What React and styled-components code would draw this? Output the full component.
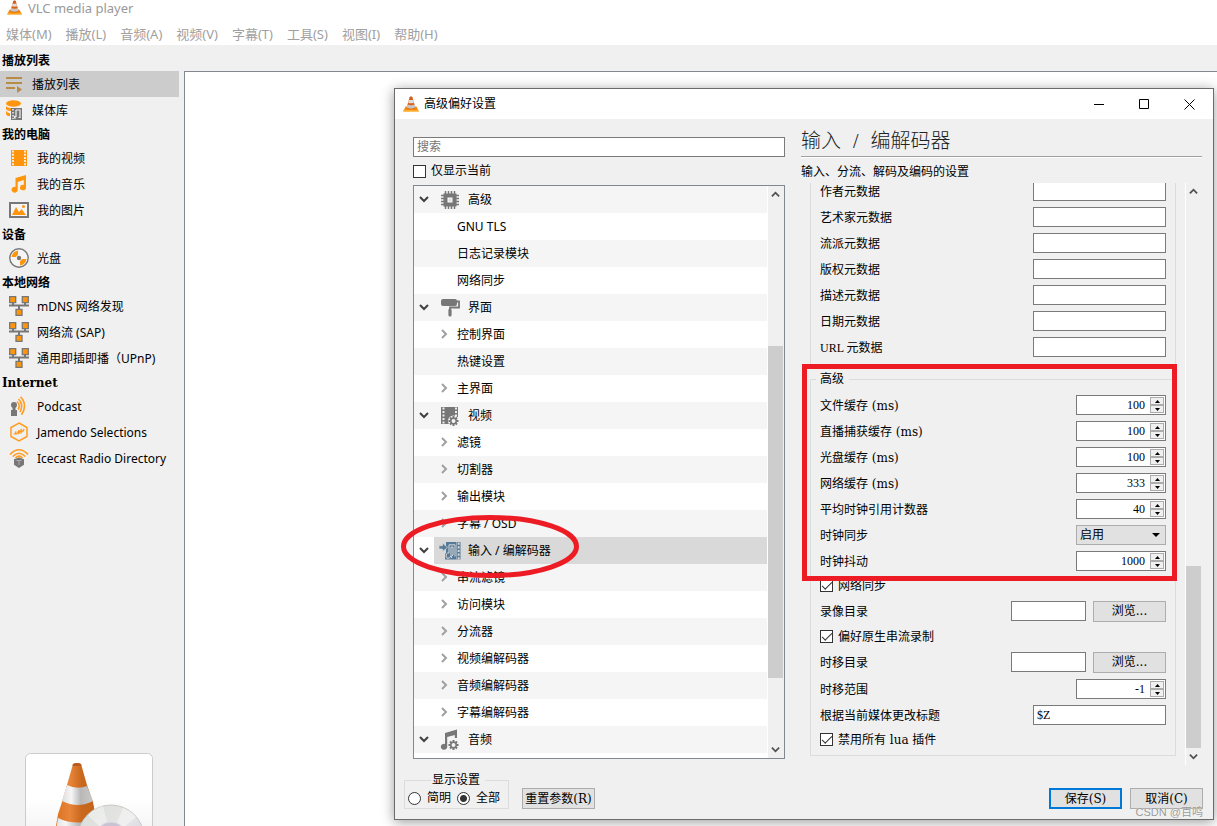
import React, { useState } from "react";
import styled, { createGlobalStyle } from "styled-components";

const uiFont = `"Noto Sans", "Noto Sans CJK SC", sans-serif`;
const formFont = `"DejaVu Serif", "Noto Sans CJK SC", serif`;
const numberFont = `"Liberation Serif", "Noto Sans CJK SC", serif`;

const GlobalStyle = createGlobalStyle`
	* {
		box-sizing: border-box;
	}
	body {
		margin: 0;
		overflow: hidden;
		background: #f0f0f0;
		color: #000;
		font: 12px/16px ${uiFont};
	}
	button, input, select {
		margin: 0;
		font: inherit;
		color: inherit;
	}
`;

const Page = styled.div`
	position: relative;
	display: flex;
	flex-direction: column;
	height: 100vh;
	overflow: hidden;
`;
const AppTitle = styled.header`
	display: flex;
	align-items: center;
	gap: 6px;
	height: 18px;
	padding: 0 7px 2px;
	background: #fff;
	color: #999;
	font-size: 13px;
	svg {
		align-self: flex-start;
	}
`;
const MenuBar = styled.nav`
	display: flex;
	align-items: center;
	gap: 14px;
	height: 27px;
	padding: 5px 6px 0;
	background: #fff;
`;
const MenuButton = styled.button`
	padding: 0;
	border: 0;
	background: none;
	color: #a0a0a0;
	font-size: 13px;
	white-space: nowrap;
`;
const Workspace = styled.div`
	display: flex;
	flex: 1;
	min-height: 0;
`;
const Sidebar = styled.aside`
	display: flex;
	flex-direction: column;
	flex: none;
	width: 184px;
	padding-top: 4px;
`;
const SideTitle = styled.h2`
	height: 22px;
	margin: 0;
	padding-left: 2px;
	font: bold 12px/24px ${formFont};
`;
const SideItem = styled.a`
	display: flex;
	align-items: center;
	gap: 8px;
	height: 26px;
	width: 179px;
	padding-left: ${props => (props.$compact ? 4 : 9)}px;
	background: ${props => (props.$active ? "#cccccc" : "transparent")};
	color: #000;
	text-decoration: none;
	white-space: nowrap;
	svg {
		flex: none;
	}
`;
const SideLabel = styled.span`
	padding-top: 2px;
`;
const Cover = styled.div`
	height: 73px;
	margin: auto 0 0 25px;
	overflow: hidden;
	svg {
		display: block;
	}
`;
const Content = styled.main`
	flex: 1;
	margin-top: 26px;
	border: solid #828790;
	border-width: 1px 0 0 1px;
	background: #fff;
`;

// preferences window
const Dialog = styled.section`
	position: absolute;
	top: 88px;
	right: 3px;
	bottom: 6px;
	left: 394px;
	display: flex;
	flex-direction: column;
	border: 1px solid #6b6b6b;
	background: #f0f0f0;
	box-shadow: 0 2px 12px rgba(0, 0, 0, 0.4);
`;
const DialogTitle = styled.header`
	display: flex;
	align-items: center;
	height: 30px;
	padding: 0 1px 0 8px;
	background: #fff;
	svg {
		flex: none;
	}
	h1 {
		flex: 1;
		margin: 0 0 0 5px;
		font: 12px/16px ${uiFont};
	}
`;
const WindowButton = styled.button`
	display: grid;
	place-items: center;
	width: 45px;
	height: 29px;
	padding: 0;
	border: 0;
	background: none;
`;
const DialogBody = styled.div`
	display: grid;
	grid-template-columns: 372px minmax(0, 1fr);
	gap: 16px;
	flex: 1;
	min-height: 0;
	padding: 0 11px 0 18px;
	font-family: ${formFont};
`;
const TreeColumn = styled.div`
	display: flex;
	flex-direction: column;
	min-height: 0;
	padding: 18px 0 13px;
`;
const TextBox = styled.input`
	width: ${props => props.$width || "100%"};
	height: 20px;
	padding: 0 3px;
	border: 1px solid #7a7a7a;
	border-radius: 0;
	background: #fff;
	font-family: ${numberFont};
	outline: 0;
	&::placeholder {
		color: #757575;
	}
`;
const CheckLabel = styled.label`
	display: flex;
	align-items: center;
	gap: 5px;
	height: ${props => props.$height}px;
`;
const CheckBox = styled.input`
	display: grid;
	place-items: center;
	width: 13px;
	height: 13px;
	appearance: none;
	border: 1px solid #333;
	background: #fff;
	&:checked::before {
		content: "";
		width: 9px;
		height: 4px;
		margin-top: -3px;
		border: solid #333;
		border-width: 0 0 1px 1px;
		transform: rotate(-45deg);
	}
`;
const TreeBox = styled.div`
	display: flex;
	flex: 1;
	min-height: 0;
	border: 1px solid #828790;
	background: #fff;
	overflow: hidden;
`;
const TreeList = styled.ul`
	flex: 1;
	margin: 0 1px 0 0;
	padding: 0;
	list-style: none;
	font-family: ${uiFont};
`;
const TreeRow = styled.li`
	display: flex;
	height: 27px;
	background: ${props => (props.$striped ? "#f5f5f5" : "#fff")};
`;
const TreeToggle = styled.span`
	display: grid;
	place-items: center;
	flex: none;
	width: 20px;
	padding: 0 1px 2px 0;
	color: ${props => (props.$child ? "#a0a0a0" : "#404040")};
`;
const TreeItem = styled.span`
	display: flex;
	align-items: center;
	flex: 1;
	gap: ${props => (props.$child ? 3 : 8)}px;
	padding-left: ${props => (props.$child ? 0 : 6)}px;
	background: ${props => (props.$selected ? "#d9d9d9" : "transparent")};
	svg {
		flex: none;
	}
`;
const ScrollBar = styled.div`
	display: flex;
	flex-direction: column;
	flex: none;
	width: ${props => (props.$edge ? 17 : 16)}px;
	border-left: ${props => (props.$edge ? "1px solid #fff" : 0)};
	background: #f0f0f0;
	color: #505050;
`;
const ScrollArrow = styled.button`
	display: grid;
	place-items: center;
	flex: none;
	width: 15px;
	height: 17px;
	padding: 0;
	border: 0;
	background: none;
`;
const ScrollTrack = styled.div`
	display: flex;
	flex-direction: column;
	flex: 1;
`;
const ScrollSpace = styled.div`
	flex: ${props => props.$size};
`;
const ScrollThumb = styled.div`
	flex: ${props => props.$size};
	background: #cdcdcd;
	width: 15px;
`;
const OptionColumn = styled.div`
	display: flex;
	flex-direction: column;
	min-height: 0;
	padding-bottom: 7px;
`;
const OptionTitle = styled.h2`
	flex: none;
	height: 38px;
	margin: 0;
	padding-top: 7px;
	border-bottom: 1px solid #a0a0a0;
	box-shadow: 0 1px #fff;
	color: #222;
	font: 300 20px/30px ${numberFont};
	white-space: nowrap;
`;
const Slash = styled.span`
	margin: 0 7px;
`;
const OptionHint = styled.p`
	flex: none;
	height: 26px;
	margin: 0;
	line-height: 30px;
`;
const OptionScroll = styled.div`
	display: flex;
	flex: 1;
	min-height: 0;
	gap: 9px;
`;
const OptionPane = styled.div`
	display: flex;
	flex-direction: column;
	justify-content: flex-end;
	flex: 1;
	gap: 4px;
	padding: 0 0 9px 9px;
	overflow: hidden;
`;
const Group = styled.fieldset`
	flex: none;
	min-width: 0;
	margin: 0;
	padding: ${props => (props.$first ? "0 9px 6px" : "5px 9px 4px")};
	border: 1px solid #dcdcdc;
	legend {
		padding: 0 5px 0 4px;
		margin-left: -4px;
	}
`;
const OptionRow = styled.div`
	display: flex;
	align-items: center;
	gap: 7px;
	height: ${props => props.$height || 26}px;
	label {
		flex: 1;
		padding-top: 2px;
		white-space: nowrap;
		font-family: ${props => (props.$narrow ? numberFont : formFont)};
	}
`;
const SpinBox = styled.div`
	display: flex;
	align-items: center;
	width: 90px;
	height: 20px;
	border: 1px solid #7a7a7a;
	background: #fff;
	padding-right: 1px;
	input {
		flex: 1;
		min-width: 0;
		height: 18px;
		padding: 0 5px 0 0;
		border: 0;
		background: none;
		font-family: ${numberFont};
		text-align: right;
		outline: 0;
	}
`;
const SpinButtons = styled.div`
	display: grid;
	grid-template-rows: 8px 8px;
	width: 14px;
	background: #f0f0f0;
	button {
		display: grid;
		place-items: center;
		padding: 0;
		border: 1px solid #acacac;
		background: none;
	}
`;
const SelectWrap = styled.div`
	position: relative;
	width: 90px;
	select {
		display: block;
		width: 100%;
		height: 20px;
		padding: 0 3px;
		appearance: none;
		border: 1px solid #acacac;
		border-radius: 0;
		background: #e1e1e1;
	}
	svg {
		position: absolute;
		top: 8px;
		right: 6px;
		pointer-events: none;
	}
`;
const PushButton = styled.button`
	width: 73px;
	height: 21px;
	padding: 0;
	border: ${props => (props.$primary ? "2px solid #0078d7" : "1px solid #adadad")};
	background: #e1e1e1;
	font-family: ${formFont};
	white-space: nowrap;
`;
const DialogFooter = styled.footer`
	display: flex;
	align-items: flex-end;
	height: 47px;
	padding: 0 10px 10px 9px;
	font-family: ${formFont};
`;
const ModeGroup = styled.fieldset`
	display: flex;
	align-items: center;
	gap: 6px;
	width: 105px;
	height: 37px;
	margin: 0 13px 0 0;
	padding: 0 0 0 3px;
	border: 1px solid #dcdcdc;
	legend {
		margin: 0 auto;
		padding: 0 5px 0 1px;
	}
	label {
		display: flex;
		align-items: center;
		gap: 6px;
	}
`;
const Radio = styled.input`
	width: 13px;
	height: 13px;
	appearance: none;
	border: 1px solid #333;
	border-radius: 50%;
	background: #fff;
	&:checked {
		background: radial-gradient(circle, #333 3px, #fff 4px);
	}
`;
const FooterActions = styled.div`
	display: flex;
	gap: 8px;
	margin-left: auto;
`;

// hand-drawn marks over the window
const RedFrame = styled.div`
	position: absolute;
	top: 364px;
	right: 40px;
	width: 375px;
	height: 217px;
	border: 5px solid #ed1c24;
	pointer-events: none;
`;
const RedEllipse = styled.svg`
	position: absolute;
	top: 514px;
	left: 400px;
	pointer-events: none;
`;
const Watermark = styled.span`
	position: absolute;
	right: 14px;
	bottom: 6px;
	color: #999;
	font: 11px/16px "Liberation Sans", "Noto Sans CJK SC", sans-serif;
	text-shadow: 0 0 1px #fff;
`;

const ConeIcon = ({ size = 16 }) => (
	<svg width={size} height={size} viewBox="0 0 16 16">
		<path d="M2.500 10.500h11l2 4.500H.5z" fill="#f58a0b" />
		<path d="M.6 14h14.800l.6 1.800H0z" fill="#ffab2e" />
		<path d="M6.700 1Q8 0 9.300 1L12.500 12Q8 14.400 3.500 12z" fill="#e25c10" />
		<path d="M5.900 4h4.200l.8 2.700Q8 7.700 5.100 6.700z" fill="#ddd" />
		<path d="M4.500 8.600Q8 10 11.500 8.600L12.400 11.500Q8 13.800 3.600 11.500z" fill="#c6c6c6" />
		<path d="M6.700 1Q8 0 9.300 1l.4 1.200H6.300z" fill="#b96a3a" />
	</svg>
);

const PlaylistIcon = () => (
	<svg width="20" height="18" viewBox="0 0 20 18">
		<path d="M2 3h16M2 8h16M2 13h9" stroke="#b78b48" strokeWidth="2" />
		<path d="M13 11l5 3.500-5 3.500z" fill="#b78b48" />
	</svg>
);

const LibraryIcon = () => (
	<svg width="20" height="20" viewBox="0 0 20 20">
		<ellipse cx="9.500" cy="3.500" rx="7.500" ry="3.200" fill="#ff950d" />
		<path d="M2 6q1 2 6 2v3q-5 0-6-2zM2 11q1 2 4 2.200v3q-3-.2-4-2z" fill="#ff950d" />
		<path d="M7 8h11v12H7z" fill="#777" />
		<path d="M9 9v10" stroke="#f0f0f0" strokeWidth="1.500" strokeDasharray="1.500 1.500" />
		<path d="M12 10h4v7.500h-1.500" fill="none" stroke="#eee" strokeWidth="1.200" />
		<path d="M12 10v6.500h-1.500v1.500h1.500" fill="none" stroke="#eee" strokeWidth="1.200" />
	</svg>
);

const FilmIcon = () => (
	<svg width="20" height="20" viewBox="0 0 20 20">
		<path d="M2 2h16v16H2z" fill="#ff950d" />
		<path d="M4 2.500v16M16 2.500v16" stroke="#f7ead8" strokeWidth="2" strokeDasharray="2 1.200" />
	</svg>
);

const MusicIcon = () => (
	<svg width="20" height="20" viewBox="0 0 20 20">
		<path d="M6.500 4L17 1v12.500a3 2.700 0 1 1-2.200-2.500V6L8.700 8v7.500A3.100 2.900 0 1 1 6.500 13z" fill="#ff950d" />
	</svg>
);

const PictureIcon = () => (
	<svg width="20" height="20" viewBox="0 0 20 20">
		<path d="M1 3h18v14H1z" fill="#f5f5f5" stroke="#777" strokeWidth="2" />
		<path d="M3 15l4-8 3 5 2.500-3L17 15z" fill="#ff950d" />
		<circle cx="14.500" cy="6.500" r="1.500" fill="#ff950d" />
	</svg>
);

const DiscIcon = () => (
	<svg width="20" height="20" viewBox="0 0 20 20">
		<circle cx="10" cy="10" r="9.200" fill="#f5f5f5" stroke="#777" strokeWidth="1.400" />
		<path d="M2.500 9A8 8 0 0 1 9 2.500V7a4 4 0 0 0-2 2zM17.500 11a8 8 0 0 1-6.500 6.500V13a4 4 0 0 0 2-2z" fill="#ff950d" />
		<circle cx="10" cy="10" r="2.200" fill="#777" />
	</svg>
);

const NetworkIcon = () => (
	<svg width="20" height="20" viewBox="0 0 20 20">
		<path d="M0 9.500h20M4 7v3M16 7v3M10 10v3" stroke="#777" strokeWidth="2" />
		<path d="M.7.700h6v6h-6zM13.300.700h6v6h-6zM7 13.300h6v6H7z" fill="#ff950d" stroke="#777" strokeWidth="1.300" />
	</svg>
);

const PodcastIcon = () => (
	<svg width="20" height="20" viewBox="0 0 20 20">
		<circle cx="5" cy="9" r="3" fill="#777" />
		<path d="M3.500 11h3v3H8v6H2v-6h1.500z" fill="#777" />
		<path d="M8 5.500q4 3.500 1 8M9.500 3q5.500 5 1.500 13M11.500.800q7.500 8 1 18" fill="none" stroke="#ff9c22" strokeWidth="1.600" />
	</svg>
);

const JamendoIcon = () => (
	<svg width="20" height="20" viewBox="0 0 20 20">
		<path d="M10 1l8 4.500v9L10 19l-8-4.500v-9z" fill="none" stroke="#ff9c22" strokeWidth="1.500" />
		<path d="M4.500 12h1.300L7 9.500 6.800 12H8l2-4-.5 4 3-5-.8 4.500L15 7l-.6 2.500" fill="none" stroke="#ff9c22" strokeWidth="1.100" />
	</svg>
);

const IcecastIcon = () => (
	<svg width="20" height="20" viewBox="0 0 20 20">
		<path d="M1 6.500q9-9.500 18 0M3.700 8.500q6.300-6.500 12.600 0M6.500 10q3.500-3.500 7 0" fill="none" stroke="#ff9c22" strokeWidth="1.700" />
		<path d="M5 11.200l5-1.700 5 1.700v5.500L10 20l-5-3.300z" fill="#777" />
		<path d="M7.500 12.500h5M10 12.500V17" stroke="#aaa" strokeWidth="1" />
	</svg>
);

const gearTeeth = "M13.500 10v10M8.500 15h10M10 11.500l7 7M17 11.500l-7 7";

const ChipIcon = () => (
	<svg width="20" height="20" viewBox="0 0 20 20">
		<path d="M5.500 1v18M8.500 1v18M11.500 1v18M14.500 1v18M1 5.500h18M1 8.500h18M1 11.500h18M1 14.500h18" stroke="#777" strokeWidth="1.500" />
		<path d="M3.500 3.500h13v13h-13z" fill="#777" />
		<path d="M7.500 7.500h5v5h-5z" fill="#fff" />
		<path d="M8.500 8.500h3v3h-3z" fill="#ddd" />
	</svg>
);

const RollerIcon = () => (
	<svg width="20" height="20" viewBox="0 0 20 20">
		<rect x="1" y="1" width="16" height="7" rx="2" fill="#777" />
		<path d="M16 3.500h3v6H10V13" fill="none" stroke="#777" strokeWidth="1.800" />
		<path d="M10 12v5" stroke="#777" strokeWidth="3.200" strokeLinecap="round" />
	</svg>
);

const VideoGearIcon = () => (
	<svg width="20" height="20" viewBox="0 0 20 20">
		<path d="M1 1h17v10H11v7H1z" fill="#777" />
		<path d="M3.500 1.500V19M16 1.500V11" stroke="#eee" strokeWidth="2" strokeDasharray="2 1.500" />
		<circle cx="13.500" cy="15" r="5.500" fill="#f5f5f5" />
		<path d={gearTeeth} stroke="#777" strokeWidth="2" />
		<circle cx="13.500" cy="15" r="2.700" fill="#f5f5f5" stroke="#777" strokeWidth="1.500" />
	</svg>
);

const AudioGearIcon = () => (
	<svg width="20" height="22" viewBox="0 0 20 22">
		<path d="M5 4l12-3.500V9h-2.200V6L7.200 8v9.500A3.200 3 0 1 1 5 15z" fill="#777" />
		<g transform="translate(0 1)">
			<path d={gearTeeth} stroke="#777" strokeWidth="2" />
			<circle cx="13.500" cy="15" r="2.700" fill="#f5f5f5" stroke="#777" strokeWidth="1.500" />
		</g>
	</svg>
);

const CodecIcon = () => (
	<svg width="20" height="20" viewBox="0 0 20 20" overflow="visible">
		<path d="M6 1h14.500v17.500H5v-6h1z" fill="#557a98" />
		<path d="M18.700 1.500v17" stroke="#d9d9d9" strokeWidth="1.800" strokeDasharray="2.200 1.500" />
		<path d="M16.700 1v17.500" stroke="#d9d9d9" strokeWidth=".6" />
		<path d="M15 15.500V3.800H9V12H7.500Q6 12.500 6 15t2 2.300 3-2.300V6h2v8q-2 1-1.500 3" fill="none" stroke="#d9d9d9" strokeWidth="1" />
		<path d="M-1 4.800h3.500V2L7.500 6.500 2.500 10.500V8H-1z" fill="#557a98" stroke="#d9d9d9" strokeWidth=".7" />
	</svg>
);

const Chevron = ({ d, size = 10 }) => (
	<svg width={size} height={size} viewBox="0 0 10 10">
		<path d={d} fill="none" stroke="currentColor" strokeWidth="2" />
	</svg>
);

const chevrons = {
	up: "M1 7l4-4 4 4",
	down: "M1 3l4 4 4-4",
	right: "M3 1l4 4-4 4",
};

const Triangle = ({ up, width = 5 }) => (
	<svg width={width} height={width === 5 ? 3 : 4} viewBox="0 0 8 4" preserveAspectRatio="none">
		<path d={up ? "M0 4l4-4 4 4z" : "M0 0h8L4 4z"} fill="#000" />
	</svg>
);

const CoverArt = () => (
	<svg width="128" height="128" viewBox="0 0 128 128">
		<defs>
			<linearGradient id="paper" x1="0" y1="0" x2="0" y2="1">
				<stop offset=".35" stopColor="#fff" />
				<stop offset="1" stopColor="#e4e4e4" />
			</linearGradient>
			<linearGradient id="orange">
				<stop offset="0" stopColor="#d9701c" />
				<stop offset=".35" stopColor="#e8853a" />
				<stop offset=".6" stopColor="#c8681c" />
				<stop offset="1" stopColor="#c0631a" />
			</linearGradient>
			<linearGradient id="silver">
				<stop offset="0" stopColor="#ddd" />
				<stop offset=".3" stopColor="#f6f6f6" />
				<stop offset=".6" stopColor="#b8b8b8" />
				<stop offset="1" stopColor="#c8c8c8" />
			</linearGradient>
			<linearGradient id="disc" x1="0" y1="0" x2="1" y2="1">
				<stop offset="0" stopColor="#d8dcd6" />
				<stop offset=".5" stopColor="#e6e6e6" />
				<stop offset="1" stopColor="#c8c0dc" />
			</linearGradient>
		</defs>
		<rect x=".5" y=".5" width="127" height="127" rx="5" fill="url(#paper)" stroke="#ccc" />
		<path d="M48 11q4-2 8 0l6 21 6 17 8 42H28l5-30 4-12 5-17z" fill="url(#orange)" />
		<path d="M42 32q10 5 20 1l6 15q-15 8-31 0z" fill="url(#silver)" />
		<path d="M33 65q16 8 38 2v30H28z" fill="url(#silver)" />
		<path d="M48 11q4-2 8 0l.5 2h-9z" fill="#b75c1b" />
		<circle cx="86" cy="85" r="33" fill="url(#disc)" stroke="#c6cac4" />
		<path d="M86 85L63 62q7-7 15-9zM86 85l12-30q7 2 13 9z" fill="#fff" opacity=".4" />
		<circle cx="86" cy="85" r="16" fill="#c9c3d3" stroke="#ddd" />
	</svg>
);

const menus = ["媒体(M)", "播放(L)", "音频(A)", "视频(V)", "字幕(T)", "工具(S)", "视图(I)", "帮助(H)"];

const sections = [
	{
		title: "播放列表",
		compact: true,
		items: [
			{ name: "播放列表", icon: PlaylistIcon, active: true },
			{ name: "媒体库", icon: LibraryIcon },
		],
	},
	{
		title: "我的电脑",
		items: [
			{ name: "我的视频", icon: FilmIcon },
			{ name: "我的音乐", icon: MusicIcon },
			{ name: "我的图片", icon: PictureIcon },
		],
	},
	{ title: "设备", items: [{ name: "光盘", icon: DiscIcon }] },
	{
		title: "本地网络",
		items: [
			{ name: "mDNS 网络发现", icon: NetworkIcon },
			{ name: "网络流 (SAP)", icon: NetworkIcon },
			{ name: "通用即插即播（UPnP)", icon: NetworkIcon },
		],
	},
	{
		title: "Internet",
		items: [
			{ name: "Podcast", icon: PodcastIcon },
			{ name: "Jamendo Selections", icon: JamendoIcon },
			{ name: "Icecast Radio Directory", icon: IcecastIcon },
		],
	},
];

const tree = [
	{ name: "高级", icon: ChipIcon },
	{ name: "GNU TLS", leaf: true },
	{ name: "日志记录模块", leaf: true },
	{ name: "网络同步", leaf: true },
	{ name: "界面", icon: RollerIcon },
	{ name: "控制界面" },
	{ name: "热键设置", leaf: true },
	{ name: "主界面" },
	{ name: "视频", icon: VideoGearIcon },
	{ name: "滤镜" },
	{ name: "切割器" },
	{ name: "输出模块" },
	{ name: "字幕 / OSD" },
	{ name: "输入 / 编解码器", icon: CodecIcon, selected: true },
	{ name: "串流滤镜" },
	{ name: "访问模块" },
	{ name: "分流器" },
	{ name: "视频编解码器" },
	{ name: "音频编解码器" },
	{ name: "字幕编解码器" },
	{ name: "音频", icon: AudioGearIcon },
];

const metadata = ["作者元数据", "艺术家元数据", "流派元数据", "版权元数据", "描述元数据", "日期元数据", "URL 元数据"];

const caching = [
	["文件缓存 (ms)", 100],
	["直播捕获缓存 (ms)", 100],
	["光盘缓存 (ms)", 100],
	["网络缓存 (ms)", 333],
	["平均时钟引用计数器", 40],
];

function SpinRow({ id, label, value }) {
	const [number, setNumber] = useState(value);

	return (
		<OptionRow>
			<label htmlFor={id}>{label}</label>
			<SpinBox>
				<input
					id={id}
					type="text"
					inputMode="numeric"
					value={number}
					onChange={e => setNumber(e.target.value)}
				/>
				<SpinButtons>
					<button aria-label="+" onClick={() => setNumber(Number(number) + 1)}>
						<Triangle up />
					</button>
					<button aria-label="-" onClick={() => setNumber(Number(number) - 1)}>
						<Triangle />
					</button>
				</SpinButtons>
			</SpinBox>
		</OptionRow>
	);
}

function FolderRow({ id, label }) {
	return (
		<OptionRow $height={28}>
			<label htmlFor={id}>{label}</label>
			<TextBox id={id} type="text" $width="75px" />
			<PushButton>浏览...</PushButton>
		</OptionRow>
	);
}

function CheckRow({ label, height = 23, checked = true }) {
	return (
		<CheckLabel $height={height}>
			<CheckBox type="checkbox" defaultChecked={checked} />
			{label}
		</CheckLabel>
	);
}

function Scroll({ before, thumb, after, edge }) {
	return (
		<ScrollBar $edge={edge}>
			<ScrollArrow aria-label="up">
				<Chevron d={chevrons.up} size={9} />
			</ScrollArrow>
			<ScrollTrack>
				<ScrollSpace $size={before} />
				<ScrollThumb $size={thumb} />
				<ScrollSpace $size={after} />
			</ScrollTrack>
			<ScrollArrow aria-label="down">
				<Chevron d={chevrons.down} size={9} />
			</ScrollArrow>
		</ScrollBar>
	);
}

function Preferences() {
	return (
		<Dialog>
			<DialogTitle>
				<ConeIcon />
				<h1>高级偏好设置</h1>
				<WindowButton aria-label="minimize">
					<svg width="11" height="11">
						<path d="M0 5.500h10" stroke="#000" />
					</svg>
				</WindowButton>
				<WindowButton aria-label="maximize">
					<svg width="11" height="11">
						<path d="M.5.500h9v9h-9z" fill="none" stroke="#000" />
					</svg>
				</WindowButton>
				<WindowButton aria-label="close">
					<svg width="11" height="11">
						<path d="M.5.500l10 10M10.500.500l-10 10" stroke="#000" />
					</svg>
				</WindowButton>
			</DialogTitle>
			<DialogBody>
				<TreeColumn>
					<TextBox type="text" placeholder="搜索" aria-label="搜索" />
					<CheckRow label="仅显示当前" height={28} checked={false} />
					<TreeBox>
						<TreeList>
							{tree.map((node, index) => (
								<TreeRow key={index} $striped={index % 2 === 0}>
									<TreeToggle>{node.icon && <Chevron d={chevrons.down} />}</TreeToggle>
									<TreeItem $child={!node.icon} $selected={node.selected}>
										{node.icon ? (
											<node.icon />
										) : (
											<TreeToggle $child>{!node.leaf && <Chevron d={chevrons.right} />}</TreeToggle>
										)}
										{node.name}
									</TreeItem>
								</TreeRow>
							))}
						</TreeList>
						<Scroll before={143} thumb={332} after={63} />
					</TreeBox>
				</TreeColumn>
				<OptionColumn>
					<OptionTitle>
						输入<Slash> / </Slash>编解码器
					</OptionTitle>
					<OptionHint>输入、分流、解码及编码的设置</OptionHint>
					<OptionScroll>
						<OptionPane>
							<Group $first>
								{metadata.map((name, index) => (
									<OptionRow key={name} $narrow={name.startsWith("URL")}>
										<label htmlFor={`meta-${index}`}>{name}</label>
										<TextBox id={`meta-${index}`} type="text" $width="133px" />
									</OptionRow>
								))}
							</Group>
							<Group>
								<legend>高级</legend>
								{caching.map(([name, value], index) => (
									<SpinRow key={name} id={`cache-${index}`} label={name} value={value} />
								))}
								<OptionRow>
									<label htmlFor="clock-sync">时钟同步</label>
									<SelectWrap>
										<select id="clock-sync">
											<option>启用</option>
										</select>
										<Triangle width={8} />
									</SelectWrap>
								</OptionRow>
								<SpinRow id="jitter" label="时钟抖动" value={1000} />
								<CheckRow label="网络同步" />
								<FolderRow id="record-dir" label="录像目录" />
								<CheckRow label="偏好原生串流录制" />
								<FolderRow id="shift-dir" label="时移目录" />
								<SpinRow id="shift-size" label="时移范围" value={-1} />
								<OptionRow>
									<label htmlFor="title-format">根据当前媒体更改标题</label>
									<TextBox id="title-format" type="text" defaultValue="$Z" $width="133px" />
								</OptionRow>
								<CheckRow label="禁用所有 lua 插件" />
							</Group>
						</OptionPane>
						<Scroll before={366} thumb={182} after={0} edge />
					</OptionScroll>
				</OptionColumn>
			</DialogBody>
			<DialogFooter>
				<ModeGroup>
					<legend>显示设置</legend>
					<label>
						<Radio type="radio" name="mode" />
						简明
					</label>
					<label>
						<Radio type="radio" name="mode" defaultChecked />
						全部
					</label>
				</ModeGroup>
				<PushButton>重置参数(R)</PushButton>
				<FooterActions>
					<PushButton $primary>保存(S)</PushButton>
					<PushButton>取消(C)</PushButton>
				</FooterActions>
			</DialogFooter>
		</Dialog>
	);
}

export default function App() {
	return (
		<Page>
			<GlobalStyle />
			<AppTitle>
				<ConeIcon size={15} />
				VLC media player
			</AppTitle>
			<MenuBar>
				{menus.map(name => (
					<MenuButton key={name}>{name}</MenuButton>
				))}
			</MenuBar>
			<Workspace>
				<Sidebar>
					{sections.map(section => (
						<div key={section.title}>
							<SideTitle>{section.title}</SideTitle>
							{section.items.map(item => (
								<SideItem key={item.name} href="#" $compact={section.compact} $active={item.active}>
									<item.icon />
									<SideLabel>{item.name}</SideLabel>
								</SideItem>
							))}
						</div>
					))}
					<Cover>
						<CoverArt />
					</Cover>
				</Sidebar>
				<Content />
			</Workspace>
			<Preferences />
			<RedFrame />
			<RedEllipse width="182" height="66" viewBox="0 0 182 66">
				<ellipse cx="90" cy="32.500" rx="86.500" ry="29" fill="none" stroke="#ed1c24" strokeWidth="5" />
			</RedEllipse>
			<Watermark>CSDN @百鸣</Watermark>
		</Page>
	);
}
